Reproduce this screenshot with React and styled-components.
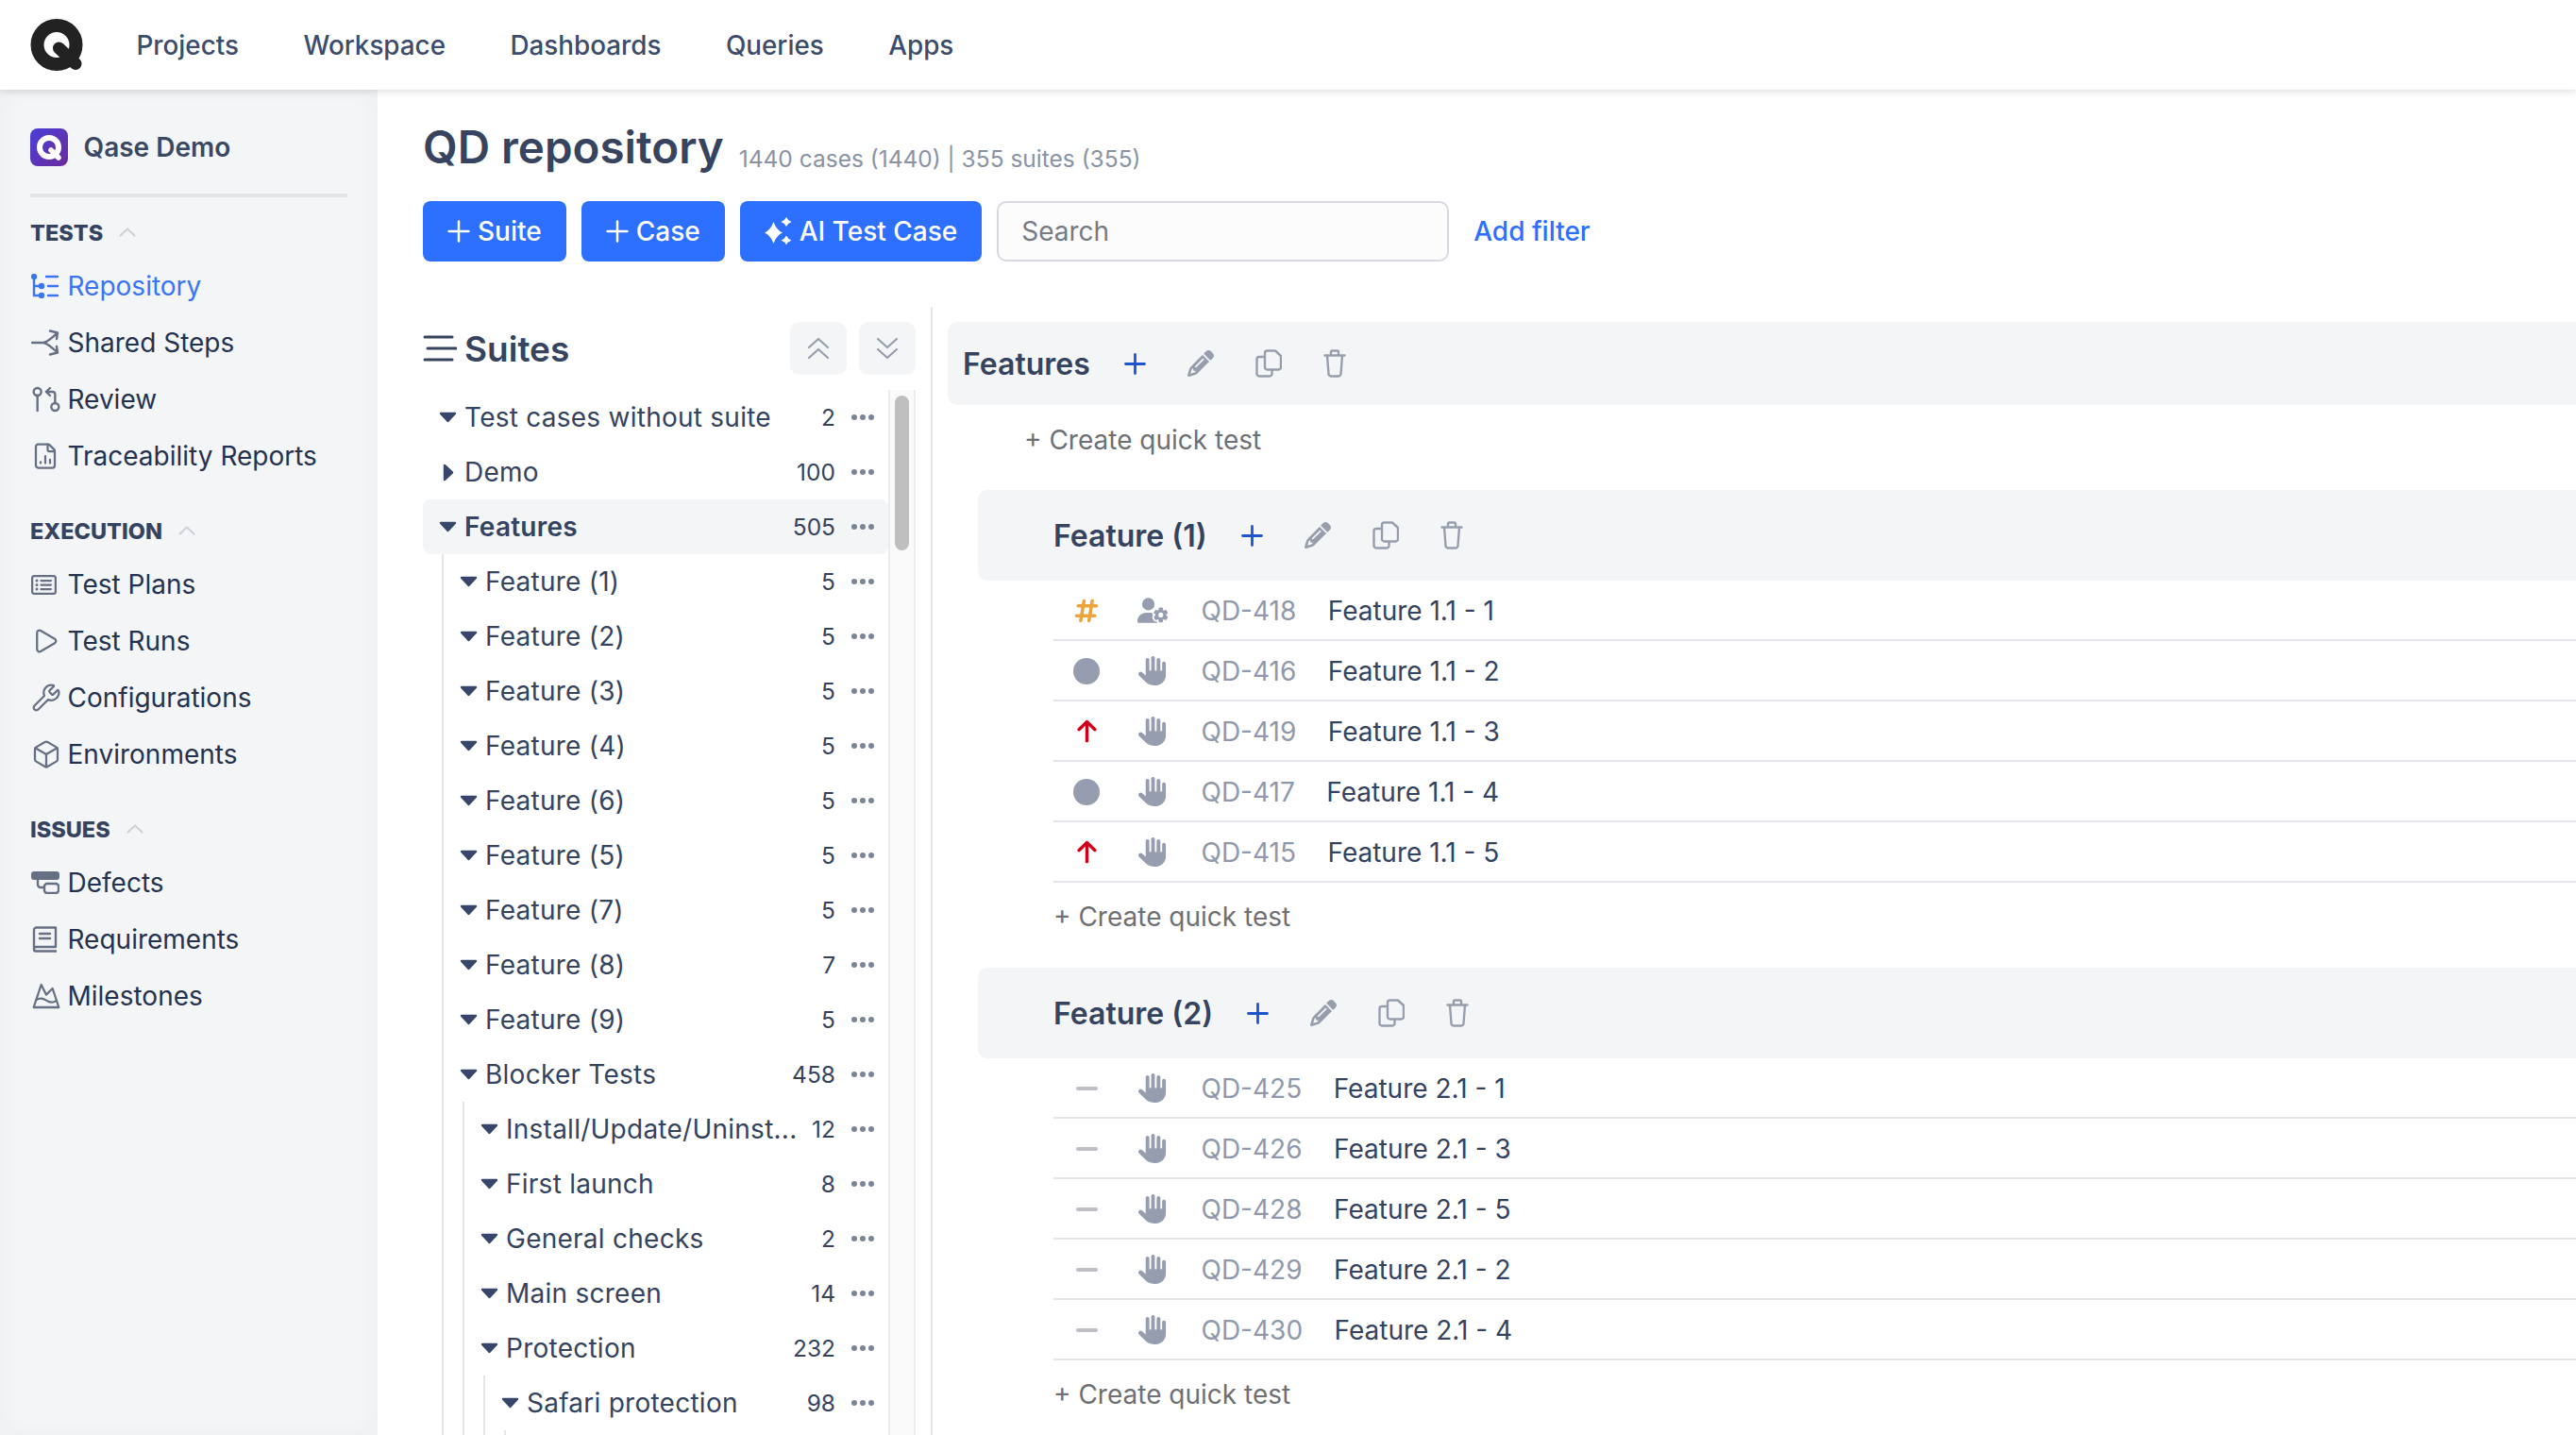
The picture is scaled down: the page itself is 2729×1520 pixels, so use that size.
import React from 'react';
import styled, { createGlobalStyle } from 'styled-components';
import { FaHand, FaUserGear, FaHashtag, FaArrowUp, FaPencil, FaRegRectangleList } from 'react-icons/fa6';
import { GitPullRequestArrow, FileChartColumn, Play, Wrench, Box, MountainSnow } from 'lucide-react';

const Global = createGlobalStyle`
  html, body { margin: 0; padding: 0; height: 100%; overflow: hidden; background: #fff; }
  body { font-family: Inter, "Liberation Sans", sans-serif; color: #344360; }
  * { box-sizing: border-box; }
`;

const Page = styled.div`display: flex; flex-direction: column; height: 100vh; overflow: hidden;`;
const TopBar = styled.header`
  height: 95px; flex: none; display: flex; align-items: center; padding-left: 32px; background: #fff;
  box-shadow: 0 1px 8px rgba(30, 40, 60, .18); position: relative; z-index: 2;
`;
const NavList = styled.nav`display: flex; gap: 68.500px; margin-left: 56.500px;`;
const NavLink = styled.span`font-size: 27.800px; font-weight: 500; color: #3c4c6b;`;
const Body = styled.div`flex: 1; display: flex; min-height: 0;`;
const Sidebar = styled.aside`
  width: 400px; flex: none; background: #f4f5f7; padding: 41px 32px 0;
  box-shadow: inset 0 0 22px rgba(40, 50, 70, .035);
`;
const Project = styled.div`
  display: flex; align-items: center; gap: 16.500px; height: 40px; font-size: 28px; font-weight: 600; color: #3a4863;
`;
const Divider = styled.div`height: 4px; background: #e4e5e7; margin-top: 29px;`;
const GroupTitle = styled.div`
  display: flex; align-items: center; gap: 17px; height: 24px; margin-top: ${p => p.$top}px;
  font-size: 23.500px; font-weight: 800; color: #344360;
  svg { color: #ced1d8; }
`;
const NavItems = styled.div`display: flex; flex-direction: column; margin-top: 15px;`;
const NavItem = styled.div`
  display: flex; align-items: center; height: 60px; font-size: 28px;
  color: ${p => (p.$active ? '#3a75f6' : '#25324f')};
`;
const NavIcon = styled.span`
  width: 39.500px; flex: none; display: flex; align-items: center; padding-left: 1px;
  color: ${p => (p.$active ? '#3a75f6' : '#667085')};
`;
const Main = styled.main`flex: 1; min-width: 0; padding: 32px 0 0 48px; display: flex; flex-direction: column;`;
const TitleRow = styled.div`display: flex; align-items: center; gap: 16px; height: 58px; line-height: 58px; margin-bottom: 28px;`;
const Title = styled.h1`margin: 0; font-size: 47.500px; font-weight: 600; color: #36445f;`;
const Meta = styled.span`font-size: 24.500px; color: #8a93a5; margin-top: 24px;`;
const Toolbar = styled.div`display: flex; align-items: center; gap: 16px; height: 64px; margin-bottom: 48px;`;
const PrimaryButton = styled.button`
  height: 64px; border: 0; border-radius: 8px; background: #2d6fff; color: #fff; padding: 0 26px;
  display: flex; align-items: center; gap: 8px; font: 500 28px Inter, sans-serif;
`;
const Search = styled.input`
  width: 479px; height: 64px; border: 2px solid #d6d9df; border-radius: 10px; background: #fcfcfc; padding: 0 24px;
  font: 400 28px Inter, sans-serif; outline: 0;
  &::placeholder { color: #767b84; opacity: 1; }
`;
const FilterLink = styled.span`font-size: 28px; font-weight: 500; color: #2d6fff; margin-left: 10px;`;
const Content = styled.div`flex: 1; min-height: 0; display: flex;`;
const SuitesColumn = styled.section`
  width: 540px; flex: none; padding: 16px 16px 0 0; border-right: 2px solid #e4e5ea; display: flex; flex-direction: column; min-height: 0;
`;
const SuitesHead = styled.div`display: flex; align-items: center; height: 56px; margin-bottom: 16px;`;
const SuitesTitle = styled.h2`margin: 0 0 0 8px; font-size: 37px; font-weight: 600; color: #36445f; flex: 1;`;
const SquareButton = styled.div`
  width: 60px; height: 56px; margin-left: 13px; border-radius: 10px; background: #f4f5f7; color: #969eae;
  display: flex; align-items: center; justify-content: center;
`;
const TreeWrap = styled.div`flex: 1; min-height: 0; display: flex; overflow: hidden;`;
const Tree = styled.div`width: 493px; flex: none;`;
const Track = styled.div`width: 29px; flex: none; background: #fafafa; border-left: 2px solid #ececec; border-right: 2px solid #ececec; padding: 6px 5px 0;`;
const Thumb = styled.div`height: 164px; border-radius: 8px; background: #bfbfbf;`;
const Row = styled.div`
  display: flex; align-items: center; height: 58px; padding: 0 15px 0 17px; border-radius: 8px;
  background: ${p => (p.$selected ? '#f4f5f7' : 'transparent')};
`;
const CaretBox = styled.span`width: 19px; flex: none; display: flex; justify-content: center; color: #37466a;`;
const RowName = styled.span`
  flex: 1; min-width: 0; margin-left: 8px; font-size: 28px; letter-spacing: .25px; white-space: nowrap; overflow: hidden; text-overflow: ellipsis;
  font-weight: ${p => (p.$selected ? 600 : 400)}; color: #344360;
`;
const Count = styled.span`font-size: 24.500px; color: #344360; margin-left: 14px; flex: none;`;
const Dots = styled.svg`margin-left: 17px; flex: none; color: #7b8598;`;
const Nested = styled.div`margin-left: 20px; border-left: 2px solid #e4e5ea;`;
const Repo = styled.section`flex: 1; min-width: 0; padding: 16px 0 0 16px; overflow: hidden;`;
const SuiteHead = styled.div`
  display: flex; align-items: center; height: ${p => (p.$sub ? 96 : 88)}px; padding-left: ${p => (p.$sub ? 80 : 16)}px;
  border-radius: 10px 0 0 10px; background: #f4f5f7;
`;
const SuiteName = styled.h3`margin: 0 36px 0 0; font-size: 32px; font-weight: 600; color: #344360;`;
const HeadIcons = styled.div`display: flex; align-items: center; gap: 44px; color: #969eae;`;
const PlusIcon = styled.span`display: flex; color: #1f55cc;`;
const Quick = styled.div`
  display: flex; align-items: center; height: ${p => p.$h}px; padding-left: ${p => p.$x}px; margin-bottom: ${p => p.$mb}px;
  font-size: 28px; color: #6e7075;
`;
const SubSuite = styled.div`margin-left: 32px;`;
const Rows = styled.div`margin-left: 80px;`;
const CaseRow = styled.div`display: flex; align-items: center; height: 64px; padding: 1px 0 0 11px; border-bottom: 2px solid #e4e5ea;`;
const Priority = styled.span`width: 48px; flex: none; display: flex; justify-content: center;`;
const Circle = styled.span`width: 28px; height: 28px; border-radius: 50%; background: #959dae;`;
const Dash = styled.span`width: 23px; height: 4px; border-radius: 2px; background: #bcbfc6;`;
const TypeIcon = styled.span`width: 40px; flex: none; margin-left: 26px; display: flex; justify-content: center; color: #959dae;`;
const CaseId = styled.span`margin-left: 31.500px; font-size: 28px; color: #8f99ab;`;
const CaseTitle = styled.span`margin-left: 33.500px; font-size: 28px; color: #344360;`;

const Logo = () => (
  <svg width="56" height="56" viewBox="0 0 56 56">
    <circle cx="28" cy="27.500" r="20.500" fill="#fff" stroke="#222" strokeWidth="14" />
    <path d="M30.500 31 L48 47.500" stroke="#222" strokeWidth="13" strokeLinecap="round" />
  </svg>
);
const ProjectLogo = () => (
  <svg width="40" height="40" viewBox="0 0 40 40">
    <defs>
      <linearGradient id="pl" x1="0" y1="0" x2="1" y2="1">
        <stop offset="0" stopColor="#4a3fd8" />
        <stop offset="1" stopColor="#6c2a9c" />
      </linearGradient>
    </defs>
    <rect width="40" height="40" rx="8" fill="url(#pl)" />
    <circle cx="20" cy="20" r="10" fill="none" stroke="#fff" strokeWidth="6" />
    <path d="M22 23 L30 31" stroke="#fff" strokeWidth="5.500" strokeLinecap="round" />
  </svg>
);
const RepoIcon = () => (
  <svg width="30" height="26" viewBox="0 0 30 26" fill="none" stroke="currentColor" strokeWidth="2.400" strokeLinecap="round">
    <circle cx="3" cy="3" r="2" fill="currentColor" />
    <circle cx="11" cy="13" r="2" fill="currentColor" />
    <circle cx="11" cy="23" r="2" fill="currentColor" />
    <path d="M3 3V23H10M3 13H10M16 3H28M18 13H28M18 23H28" />
  </svg>
);
const SharedIcon = () => (
  <svg width="30" height="28" viewBox="0 0 30 28" fill="none" stroke="currentColor" strokeWidth="2.400" strokeLinecap="round" strokeLinejoin="round">
    <path d="M1 14H12C17 14 20 10 27 4.500M12 14C17 14 20 18 27 23.500M20 1.500 L28 3.500 L27 10M20 26.500 L28 24.500 L27 18" />
  </svg>
);
const DefectIcon = () => (
  <svg width="30" height="24" viewBox="0 0 30 24">
    <rect x="0" y="0" width="30" height="9" rx="3" fill="currentColor" />
    <path d="M7 9V14a3 3 0 0 0 3 3h4" fill="none" stroke="currentColor" strokeWidth="2.400" />
    <rect x="14" y="13" width="15" height="10" rx="3" fill="none" stroke="currentColor" strokeWidth="2.400" />
  </svg>
);
const BookIcon = () => (
  <svg width="28" height="28" viewBox="0 0 28 28" fill="none" stroke="currentColor" strokeWidth="2.400" strokeLinejoin="round">
    <path d="M3 24V4a2.500 2.500 0 0 1 2.500-2.500H26V22H5.500A2.500 2.500 0 0 0 3 24.500 2 2 0 0 0 5 26.500H27" />
    <path d="M9 8H20M9 13H20" strokeLinecap="round" />
  </svg>
);
const HamburgerIcon = () => (
  <svg width="36" height="28" viewBox="0 0 36 28" stroke="#36445f" strokeWidth="3" strokeLinecap="round">
    <path d="M2 2H31M5 14H35M2 26H31" />
  </svg>
);
const SparkIcon = () => (
  <svg width="29" height="30" viewBox="0 0 29 30" fill="#fff">
    <path d="M9.500 5 Q12.500 13.500 19 16.500 Q12.500 19.500 9.500 28 Q6.500 19.500 0 16.500 Q6.500 13.500 9.500 5Z" />
    <path d="M23 0 Q24.500 3.500 28.500 5 Q24.500 6.500 23 10 Q21.500 6.500 17.500 5 Q21.500 3.500 23 0Z" />
    <path d="M23 19.500 Q24.500 23 28.500 24.500 Q24.500 26 23 29.500 Q21.500 26 17.500 24.500 Q21.500 23 23 19.500Z" />
  </svg>
);
const PlusGlyph = ({ size = 23, weight = 2.800 }) => (
  <svg width={size} height={size} viewBox="0 0 23 23" stroke="currentColor" strokeWidth={weight} strokeLinecap="round">
    <path d="M11.500 1.500V21.500M1.500 11.500H21.500" />
  </svg>
);
const CollapseIcon = ({ down }) => (
  <svg width="24" height="24" viewBox="0 0 24 24" fill="none" stroke="currentColor" strokeWidth="2.200" strokeLinecap="round" strokeLinejoin="round">
    {down ? <path d="M2 2L12 11L22 2M2 13L12 22L22 13" /> : <path d="M2 11L12 2L22 11M2 22L12 13L22 22" />}
  </svg>
);
const SectionChevron = () => (
  <svg width="18" height="10" viewBox="0 0 18 10" fill="none" stroke="currentColor" strokeWidth="2.200" strokeLinecap="round" strokeLinejoin="round">
    <path d="M1.500 8.500L9 1.500L16.500 8.500" />
  </svg>
);
const CopyIcon = () => (
  <svg width="28" height="30" viewBox="0 0 28 30" fill="none" stroke="currentColor" strokeWidth="2.400" strokeLinejoin="round">
    <path d="M10 4a2.500 2.500 0 0 1 2.500-2.500H21L27 7V19a2.500 2.500 0 0 1-2.500 2.500h-12A2.500 2.500 0 0 1 10 19Z" />
    <path d="M10 8H4a2.500 2.500 0 0 0-2.500 2.500V26A2.500 2.500 0 0 0 4 28.500H15A2.500 2.500 0 0 0 17.500 26V22" />
  </svg>
);
const TrashIcon = () => (
  <svg width="24" height="30" viewBox="0 0 24 30" fill="none" stroke="currentColor" strokeWidth="2.400" strokeLinecap="round" strokeLinejoin="round">
    <path d="M1.500 6.500H22.500M8 6.500V3a1.500 1.500 0 0 1 1.500-1.500h5A1.500 1.500 0 0 1 16 3V6.500M4 6.500L5.500 26A2.500 2.500 0 0 0 8 28.500H16A2.500 2.500 0 0 0 18.500 26L20 6.500" />
  </svg>
);
const Caret = ({ open }) => (
  open ? (
    <svg width="19" height="12" viewBox="0 0 19 12"><path d="M2 2H17L9.500 10Z" fill="currentColor" stroke="currentColor" strokeWidth="2.400" strokeLinejoin="round" /></svg>
  ) : (
    <svg width="12" height="19" viewBox="0 0 12 19"><path d="M2 2V17L10 9.500Z" fill="currentColor" stroke="currentColor" strokeWidth="2.400" strokeLinejoin="round" /></svg>
  )
);
const ThreeDots = () => (
  <Dots width="24" height="6" viewBox="0 0 24 6" fill="currentColor">
    <circle cx="3" cy="3" r="3" /><circle cx="12" cy="3" r="3" /><circle cx="21" cy="3" r="3" />
  </Dots>
);

const groups = [
  { title: 'TESTS', top: 25, items: [
    ['Repository', <RepoIcon />, true],
    ['Shared Steps', <SharedIcon />],
    ['Review', <GitPullRequestArrow size={32} strokeWidth={1.800} />],
    ['Traceability Reports', <FileChartColumn size={30} strokeWidth={1.800} />],
  ] },
  { title: 'EXECUTION', top: 37, items: [
    ['Test Plans', <FaRegRectangleList size={27} />],
    ['Test Runs', <Play size={30} strokeWidth={1.800} />],
    ['Configurations', <Wrench size={32} strokeWidth={1.700} />],
    ['Environments', <Box size={32} strokeWidth={1.700} />],
  ] },
  { title: 'ISSUES', top: 37, items: [
    ['Defects', <DefectIcon />],
    ['Requirements', <BookIcon />],
    ['Milestones', <MountainSnow size={32} strokeWidth={1.700} />],
  ] },
];

const SuiteRow = ({ name, count, open = true, selected }) => (
  <Row $selected={selected}>
    <CaretBox><Caret open={open} /></CaretBox>
    <RowName $selected={selected}>{name}</RowName>
    <Count>{count}</Count>
    <ThreeDots />
  </Row>
);

const feature1 = [
  ['hash', 'gear', 'QD-418', 'Feature 1.1 - 1'],
  ['circle', 'hand', 'QD-416', 'Feature 1.1 - 2'],
  ['up', 'hand', 'QD-419', 'Feature 1.1 - 3'],
  ['circle', 'hand', 'QD-417', 'Feature 1.1 - 4'],
  ['up', 'hand', 'QD-415', 'Feature 1.1 - 5'],
];
const feature2 = [
  ['dash', 'hand', 'QD-425', 'Feature 2.1 - 1'],
  ['dash', 'hand', 'QD-426', 'Feature 2.1 - 3'],
  ['dash', 'hand', 'QD-428', 'Feature 2.1 - 5'],
  ['dash', 'hand', 'QD-429', 'Feature 2.1 - 2'],
  ['dash', 'hand', 'QD-430', 'Feature 2.1 - 4'],
];

const priorityIcon = {
  hash: <FaHashtag size={28} color="#eda43a" />,
  circle: <Circle />,
  up: <FaArrowUp size={27} color="#d0021b" />,
  dash: <Dash />,
};

const SuiteHeader = ({ name, sub }) => (
  <SuiteHead $sub={sub}>
    <SuiteName>{name}</SuiteName>
    <HeadIcons>
      <PlusIcon><PlusGlyph /></PlusIcon>
      <FaPencil size={28} />
      <CopyIcon />
      <TrashIcon />
    </HeadIcons>
  </SuiteHead>
);

const Cases = ({ list }) => (
  <Rows>
    {list.map(([p, t, id, title]) => (
      <CaseRow key={id}>
        <Priority>{priorityIcon[p]}</Priority>
        <TypeIcon>{t === 'gear' ? <FaUserGear size={33} /> : <FaHand size={31} />}</TypeIcon>
        <CaseId>{id}</CaseId>
        <CaseTitle>{title}</CaseTitle>
      </CaseRow>
    ))}
  </Rows>
);

export default function App() {
  return (
    <Page>
      <Global />
      <TopBar>
        <Logo />
        <NavList>
          {['Projects', 'Workspace', 'Dashboards', 'Queries', 'Apps'].map(n => <NavLink key={n}>{n}</NavLink>)}
        </NavList>
      </TopBar>
      <Body>
        <Sidebar>
          <Project><ProjectLogo />Qase Demo</Project>
          <Divider />
          {groups.map(g => (
            <div key={g.title}>
              <GroupTitle $top={g.top}>{g.title}<SectionChevron /></GroupTitle>
              <NavItems>
                {g.items.map(([label, icon, active]) => (
                  <NavItem key={label} $active={active}>
                    <NavIcon $active={active}>{icon}</NavIcon>{label}
                  </NavItem>
                ))}
              </NavItems>
            </div>
          ))}
        </Sidebar>
        <Main>
          <TitleRow>
            <Title>QD repository</Title>
            <Meta>1440 cases (1440) | 355 suites (355)</Meta>
          </TitleRow>
          <Toolbar>
            <PrimaryButton><PlusGlyph size={24} weight={2.400} />Suite</PrimaryButton>
            <PrimaryButton><PlusGlyph size={24} weight={2.400} />Case</PrimaryButton>
            <PrimaryButton><SparkIcon />AI Test Case</PrimaryButton>
            <Search placeholder="Search" />
            <FilterLink>Add filter</FilterLink>
          </Toolbar>
          <Content>
            <SuitesColumn>
              <SuitesHead>
                <HamburgerIcon />
                <SuitesTitle>Suites</SuitesTitle>
                <SquareButton><CollapseIcon /></SquareButton>
                <SquareButton><CollapseIcon down /></SquareButton>
              </SuitesHead>
              <TreeWrap>
                <Tree>
                  <SuiteRow name="Test cases without suite" count="2" />
                  <SuiteRow name="Demo" count="100" open={false} />
                  <SuiteRow name="Features" count="505" selected />
                  <Nested>
                    <SuiteRow name="Feature (1)" count="5" />
                    <SuiteRow name="Feature (2)" count="5" />
                    <SuiteRow name="Feature (3)" count="5" />
                    <SuiteRow name="Feature (4)" count="5" />
                    <SuiteRow name="Feature (6)" count="5" />
                    <SuiteRow name="Feature (5)" count="5" />
                    <SuiteRow name="Feature (7)" count="5" />
                    <SuiteRow name="Feature (8)" count="7" />
                    <SuiteRow name="Feature (9)" count="5" />
                    <SuiteRow name="Blocker Tests" count="458" />
                    <Nested>
                      <SuiteRow name="Install/Update/Uninst..." count="12" />
                      <SuiteRow name="First launch" count="8" />
                      <SuiteRow name="General checks" count="2" />
                      <SuiteRow name="Main screen" count="14" />
                      <SuiteRow name="Protection" count="232" />
                      <Nested>
                        <SuiteRow name="Safari protection" count="98" />
                        <Nested><Row /></Nested>
                      </Nested>
                    </Nested>
                  </Nested>
                </Tree>
                <Track><Thumb /></Track>
              </TreeWrap>
            </SuitesColumn>
            <Repo>
              <SuiteHeader name="Features" />
              <Quick $h={74} $x={81} $mb={16}>+ Create quick test</Quick>
              <SubSuite>
                <SuiteHeader name="Feature (1)" sub />
                <Cases list={feature1} />
                <Quick $h={72} $x={80} $mb={18}>+ Create quick test</Quick>
                <SuiteHeader name="Feature (2)" sub />
                <Cases list={feature2} />
                <Quick $h={72} $x={80} $mb={0}>+ Create quick test</Quick>
              </SubSuite>
            </Repo>
          </Content>
        </Main>
      </Body>
    </Page>
  );
}
